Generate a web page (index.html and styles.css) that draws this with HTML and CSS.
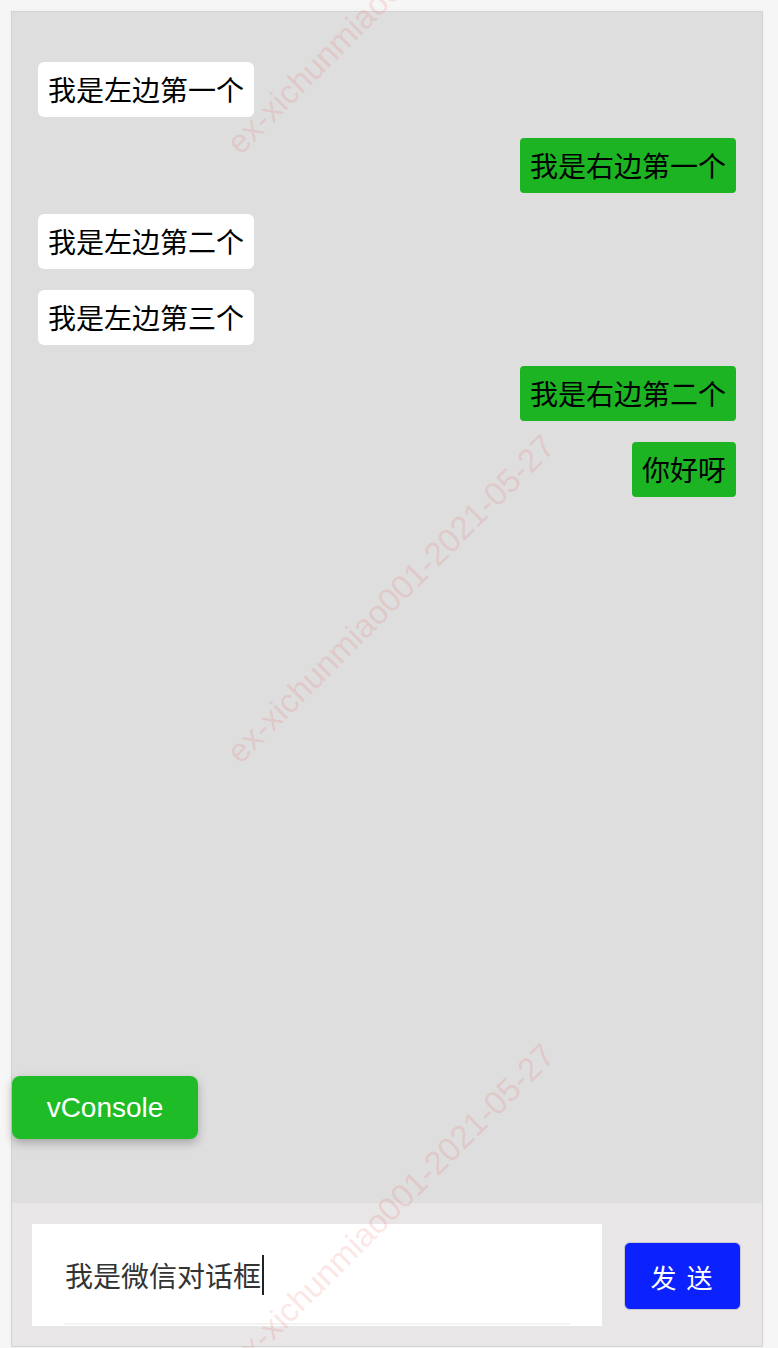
FILE: index.html
```html
<!DOCTYPE html>
<html lang="zh-CN">
<head>
<meta charset="utf-8">
<title>Chat</title>
<link rel="stylesheet" href="styles.css">
</head>
<body>
<div class="frame">
  <div class="chat">
    <div class="msg left">我是左边第一个</div>
    <div class="msg right">我是右边第一个</div>
    <div class="msg left">我是左边第二个</div>
    <div class="msg left">我是左边第三个</div>
    <div class="msg right">我是右边第二个</div>
    <div class="msg right">你好呀</div>
  </div>
  <div class="composer">
    <div class="input">
      <span class="input-text">我是微信对话框</span><span class="caret"></span>
      <div class="underline"></div>
    </div>
    <button class="send">发 送</button>
  </div>
  <div class="vconsole">vConsole</div>
</div>
<div class="wm wm1">ex-xichunmiao001-2021-05-27</div>
<div class="wm wm2">ex-xichunmiao001-2021-05-27</div>
<div class="wm wm3">ex-xichunmiao001-2021-05-27</div>
</body>
</html>
```
FILE: styles.css
```css
html, body {
  margin: 0;
  padding: 0;
}
body {
  background: #f6f6f6;
  padding: 11px 15px 0 11px;
  height: 1348px;
  box-sizing: border-box;
  position: relative;
  overflow: hidden;
  font-family: "Noto Sans CJK SC", "Liberation Sans", sans-serif;
}
.frame {
  position: relative;
  width: 752px;
  height: 1336px;
  box-sizing: border-box;
  border: 1px solid #d2d2d2;
  display: flex;
  flex-direction: column;
  box-shadow: 0 0 6px rgba(0,0,0,0.03);
}
.chat {
  flex: 1;
  background: #dedede;
  display: flex;
  flex-direction: column;
  gap: 21px;
  padding: 50px 26px 0 26px;
}
.msg {
  font-size: 28px;
  line-height: 39px;
  padding: 8px 10px;
  color: #000;
  white-space: nowrap;
}
.msg.left {
  align-self: flex-start;
  background: #ffffff;
  border-radius: 6px;
}
.msg.right {
  align-self: flex-end;
  background: #1db424;
  border-radius: 4px;
}
.composer {
  height: 143px;
  flex: none;
  background: #e8e6e7;
  display: flex;
  align-items: flex-start;
  padding: 21px 20px 0 20px;
  box-sizing: border-box;
  gap: 22px;
}
.input {
  position: relative;
  width: 570px;
  height: 102px;
  background: #fff;
  display: flex;
  align-items: center;
  padding-left: 33px;
  box-sizing: border-box;
}
.input-text {
  font-size: 28px;
  color: #333;
  line-height: 40px;
}
.caret {
  display: inline-block;
  width: 2px;
  height: 40px;
  background: #222;
  margin-left: 1px;
}
.underline {
  position: absolute;
  left: 32px;
  right: 32px;
  bottom: 1px;
  height: 2px;
  background: #f3f3f3;
}
.send {
  margin-top: 18px;
  width: 117px;
  height: 68px;
  box-sizing: border-box;
  background: #0b22ff;
  border: 1px solid #c8c8d0;
  border-radius: 6px;
  color: #fff;
  font-family: "Noto Sans CJK SC", sans-serif;
  font-size: 26px;
  letter-spacing: 2px;
  padding: 0;
}
.vconsole {
  position: absolute;
  left: 0;
  top: 1064px;
  width: 186px;
  height: 63px;
  background: #1ebc26;
  border-radius: 8px;
  color: #fff;
  font-family: "Liberation Sans", Arial, sans-serif;
  font-size: 28px;
  display: flex;
  align-items: center;
  justify-content: center;
  box-shadow: 0 4px 10px rgba(0,0,0,0.25);
}
.wm {
  position: absolute;
  left: 391px;
  font-family: "Liberation Sans", Arial, sans-serif;
  font-size: 33px;
  color: rgba(235, 60, 60, 0.14);
  white-space: nowrap;
  transform: translate(-50%, -50%) rotate(-45deg);
  pointer-events: none;
}
.wm1 { top: -10px; }
.wm2 { top: 599px; }
.wm3 { top: 1208px; }
```
